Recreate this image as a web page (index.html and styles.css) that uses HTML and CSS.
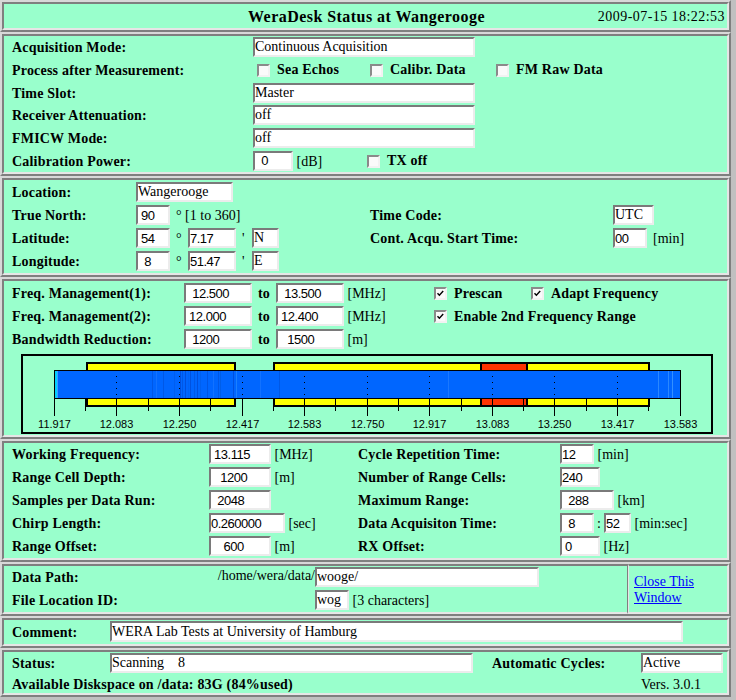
FILE: index.html
```html
<!DOCTYPE html>
<html>
<head>
<meta charset="utf-8">
<title>WeraDesk Status at Wangerooge</title>
<link rel="stylesheet" href="styles.css">
</head>
<body>

<div class="panel">
  <div class="cell head">
    <div></div>
    <div class="title">WeraDesk Status at Wangerooge</div>
    <div class="date">2009-07-15 18:22:53</div>
  </div>
</div>

<div class="panel">
  <div class="cell acq">
    <div class="lbl">Acquisition Mode:</div>
    <div class="ctl"><input class="in w222" type="text" value="Continuous Acquisition"></div>

    <div class="lbl">Process after Measurement:</div>
    <div class="opts">
      <span class="opt"><span class="cb"></span>Sea Echos</span>
      <span class="opt"><span class="cb"></span>Calibr. Data</span>
      <span class="opt"><span class="cb"></span>FM Raw Data</span>
    </div>

    <div class="lbl">Time Slot:</div>
    <div class="ctl"><input class="in w222" type="text" value="Master"></div>

    <div class="lbl">Receiver Attenuation:</div>
    <div class="ctl"><input class="in w222" type="text" value="off"></div>

    <div class="lbl">FMICW Mode:</div>
    <div class="ctl"><input class="in w222" type="text" value="off"></div>

    <div class="lbl">Calibration Power:</div>
    <div class="ctl">
      <input class="in num w40" type="text" value="  0">
      <span class="unit w74">[dB]</span>
      <span class="opt"><span class="cb"></span>TX off</span>
    </div>
  </div>
</div>

<div class="panel">
  <div class="cell loc">
    <div class="lbl">Location:</div>
    <div class="ctl"><input class="in w97" type="text" value="Wangerooge"></div>
    <div></div>
    <div></div>

    <div class="lbl">True North:</div>
    <div class="ctl"><input class="in num w34" type="text" value=" 90"><span class="deg-note">° [1 to 360]</span></div>
    <div class="lbl">Time Code:</div>
    <div class="ctl"><input class="in w41" type="text" value="UTC"></div>

    <div class="lbl">Latitude:</div>
    <div class="ctl">
      <input class="in num w34" type="text" value=" 54"><span class="deg">°</span>
      <input class="in num w48" type="text" value="7.17"><span class="minute">'</span>
      <input class="in w27" type="text" value="N">
    </div>
    <div class="lbl">Cont. Acqu. Start Time:</div>
    <div class="ctl"><input class="in num w34" type="text" value="00"><span class="unit gap6">[min]</span></div>

    <div class="lbl">Longitude:</div>
    <div class="ctl">
      <input class="in num w34" type="text" value="  8"><span class="deg">°</span>
      <input class="in num w48" type="text" value="51.47"><span class="minute">'</span>
      <input class="in w27" type="text" value="E">
    </div>
    <div></div>
    <div></div>
  </div>
</div>

<div class="panel">
  <div class="cell freq">
    <div class="frow">
      <div class="lbl flbl">Freq. Management(1):</div>
      <input class="in num w68" type="text" value="  12.500">
      <span class="to">to</span>
      <input class="in num w68" type="text" value="  13.500">
      <span class="unit w90">[MHz]</span>
      <span class="opt w97"><span class="cb"><svg class="tick" width="9" height="9" viewBox="0 0 9 9"><path d="M1.5 4.2L3.4 6.3L7.2 2" /></svg></span>Prescan</span>
      <span class="opt"><span class="cb"><svg class="tick" width="9" height="9" viewBox="0 0 9 9"><path d="M1.5 4.2L3.4 6.3L7.2 2" /></svg></span>Adapt Frequency</span>
    </div>
    <div class="frow">
      <div class="lbl flbl">Freq. Management(2):</div>
      <input class="in num w68" type="text" value=" 12.000">
      <span class="to">to</span>
      <input class="in num w68" type="text" value=" 12.400">
      <span class="unit w90">[MHz]</span>
      <span class="opt"><span class="cb"><svg class="tick" width="9" height="9" viewBox="0 0 9 9"><path d="M1.5 4.2L3.4 6.3L7.2 2" /></svg></span>Enable 2nd Frequency Range</span>
    </div>
    <div class="frow">
      <div class="lbl flbl">Bandwidth Reduction:</div>
      <input class="in num w68" type="text" value="  1200">
      <span class="to">to</span>
      <input class="in num w68" type="text" value="   1500">
      <span class="unit">[m]</span>
    </div>

    <svg class="chart" width="692" height="81" viewBox="21 352 692 81">
      <rect x="22" y="353" width="690" height="78" fill="none" stroke="#000" stroke-width="2"/>
      <rect x="87" y="361" width="148" height="43" fill="#ffff00" stroke="#000" stroke-width="2"/>
      <rect x="274" y="361" width="375" height="43" fill="#ffff00" stroke="#000" stroke-width="2"/>
      <rect x="481" y="361" width="46" height="43" fill="#ff3300" stroke="#000" stroke-width="2"/>
      <path d="M54.5 397V414M116.5 397V414M179.5 397V414M242.5 397V414M304.5 397V414M367.5 397V414M429.5 397V414M492.5 397V414M554.5 397V414M617.5 397V414M680.5 397V414" stroke="#000" stroke-width="1" fill="none"/>
      <path d="M85.5 397V409M148.5 397V409M210.5 397V409M273.5 397V409M335.5 397V409M398.5 397V409M461.5 397V409M523.5 397V409M586.5 397V409M648.5 397V409" stroke="#000" stroke-width="1" fill="none"/>
      <rect x="54.5" y="368.5" width="626" height="28" fill="#0066ff" stroke="#000" stroke-width="1"/>
      <g>
        <rect x="55" y="369" width="2" height="27" fill="#00d0ff"/>
        <rect x="57" y="369" width="1" height="27" fill="#3aa0ff"/>
        <rect x="152" y="369" width="1" height="27" fill="#0058e6"/>
        <rect x="156" y="369" width="1" height="27" fill="#1272ff"/>
        <rect x="163" y="369" width="1" height="27" fill="#0058e6"/>
        <rect x="174" y="369" width="1" height="27" fill="#005ef0"/>
        <rect x="180" y="369" width="1" height="27" fill="#0050dd"/>
        <rect x="182" y="369" width="1" height="27" fill="#0058e6"/>
        <rect x="185" y="369" width="1" height="27" fill="#0050dd"/>
        <rect x="188" y="369" width="1" height="27" fill="#0062f5"/>
        <rect x="190" y="369" width="1" height="27" fill="#0052e0"/>
        <rect x="194" y="369" width="1" height="27" fill="#005ae8"/>
        <rect x="197" y="369" width="1" height="27" fill="#0050dd"/>
        <rect x="200" y="369" width="1" height="27" fill="#0060f0"/>
        <rect x="207" y="369" width="1" height="27" fill="#0056e4"/>
        <rect x="213" y="369" width="1" height="27" fill="#1272ff"/>
        <rect x="218" y="369" width="1" height="27" fill="#0058e6"/>
        <rect x="220" y="369" width="1" height="27" fill="#005ee8"/>
        <rect x="233" y="369" width="1" height="27" fill="#0050dd"/>
        <rect x="236" y="369" width="1" height="27" fill="#1a80ff"/>
        <rect x="260" y="369" width="1" height="27" fill="#1272ff"/>
        <rect x="279" y="369" width="1" height="27" fill="#0058e6"/>
        <rect x="448" y="369" width="1" height="27" fill="#1a78ff"/>
        <rect x="658" y="369" width="1" height="27" fill="#2a88ff"/>
        <rect x="668" y="369" width="1" height="27" fill="#2a88ff"/>
        <rect x="672" y="369" width="1" height="27" fill="#3390ff"/>
      </g>
      <path d="M116.5 374V395M179.5 374V395M242.5 374V395M304.5 374V395M367.5 374V395M429.5 374V395M492.5 374V395M554.5 374V395M617.5 374V395" stroke="#000" stroke-width="1" stroke-dasharray="1 5" fill="none"/>
      <g class="axis">
        <text x="54.5" y="426">11.917</text>
        <text x="116.5" y="426">12.083</text>
        <text x="179.5" y="426">12.250</text>
        <text x="242.5" y="426">12.417</text>
        <text x="304.5" y="426">12.583</text>
        <text x="367.5" y="426">12.750</text>
        <text x="429.5" y="426">12.917</text>
        <text x="492.5" y="426">13.083</text>
        <text x="554.5" y="426">13.250</text>
        <text x="617.5" y="426">13.417</text>
        <text x="680.5" y="426">13.583</text>
      </g>
    </svg>
  </div>
</div>

<div class="panel">
  <div class="cell work">
    <div class="lbl">Working Frequency:</div>
    <div class="ctl"><input class="in num w62" type="text" value=" 13.115"><span class="unit">[MHz]</span></div>
    <div class="lbl">Cycle Repetition Time:</div>
    <div class="ctl"><input class="in num w34" type="text" value="12"><span class="unit">[min]</span></div>

    <div class="lbl">Range Cell Depth:</div>
    <div class="ctl"><input class="in num w62" type="text" value="   1200"><span class="unit">[m]</span></div>
    <div class="lbl">Number of Range Cells:</div>
    <div class="ctl"><input class="in num w40" type="text" value="240"></div>

    <div class="lbl">Samples per Data Run:</div>
    <div class="ctl"><input class="in num w62" type="text" value="  2048"></div>
    <div class="lbl">Maximum Range:</div>
    <div class="ctl"><input class="in num w54" type="text" value="  288"><span class="unit">[km]</span></div>

    <div class="lbl">Chirp Length:</div>
    <div class="ctl"><input class="in num w76" type="text" value="0.260000"><span class="unit">[sec]</span></div>
    <div class="lbl">Data Acquisiton Time:</div>
    <div class="ctl"><input class="in num w34" type="text" value="  8"><span class="colon">:</span><input class="in num w27" type="text" value="52"><span class="unit">[min:sec]</span></div>

    <div class="lbl">Range Offset:</div>
    <div class="ctl"><input class="in num w62" type="text" value="    600"><span class="unit">[m]</span></div>
    <div class="lbl">RX Offset:</div>
    <div class="ctl"><input class="in num w40" type="text" value=" 0"><span class="unit">[Hz]</span></div>
  </div>
</div>

<div class="panel">
  <div class="cell path left">
    <div class="pathlbl"><span class="lbl">Data Path:</span><span>/home/wera/data/</span></div>
    <div class="ctl"><input class="in w224" type="text" value="wooge/"></div>
    <div class="lbl">File Location ID:</div>
    <div class="ctl"><input class="in w34" type="text" value="wog"><span class="unit">[3 characters]</span></div>
  </div>
  <div class="cell right">
    <a class="close" href="#">Close This Window</a>
  </div>
</div>

<div class="panel">
  <div class="cell cmt">
    <div class="lbl cmtlbl">Comment:</div>
    <input class="in w573 h21" type="text" value="WERA Lab Tests at University of Hamburg">
  </div>
</div>

<div class="panel">
  <div class="cell status">
    <div class="lbl">Status:</div>
    <div class="ctl"><input class="in w363" type="text" value="Scanning    8"></div>
    <div class="lbl">Automatic Cycles:</div>
    <div class="ctl"><input class="in w82" type="text" value="Active"></div>
    <div class="lbl span3">Available Diskspace on /data: 83G (84%used)</div>
    <div class="vers">Vers. 3.0.1</div>
  </div>
</div>

</body>
</html>
```

FILE: styles.css
```css
* {
  box-sizing: border-box;
}

body {
  margin: 0;
  width: 736px;
  background: #c0c0c0;
  font-family: "Liberation Serif", "Times New Roman", serif;
  font-size: 14px;
  color: #000;
}

.panel {
  width: 731px;
  display: flex;
  border: 2px solid;
  border-color: #d8d8d8 #7f7f7f #7f7f7f #d8d8d8;
}

.cell {
  flex: 1;
  background: #99ffcc;
  border: 2px solid;
  border-color: #7f7f7f #e6e6e6 #e6e6e6 #7f7f7f;
  padding-left: 8px;
}

.lbl {
  font-weight: bold;
  letter-spacing: 0.2px;
  white-space: nowrap;
  padding-top: 2px;
}

.ctl {
  display: flex;
  align-items: center;
  white-space: nowrap;
}

.in {
  height: 20px;
  margin: 0;
  padding: 0;
  border: 2px solid;
  border-color: #7a7a7a #ececec #ececec #7a7a7a;
  background: #fff;
  font-family: "Liberation Serif", "Times New Roman", serif;
  font-size: 14px;
  color: #000;
  outline: none;
  flex: none;
}

.num {
  font-family: "Liberation Sans", Arial, sans-serif;
  font-size: 13px;
  letter-spacing: -0.5px;
}

.h21 { height: 21px; }
.w27 { width: 27px; }
.w34 { width: 34px; }
.w40 { width: 40px; }
.w41 { width: 41px; }
.w48 { width: 48px; }
.w54 { width: 54px; }
.w62 { width: 62px; }
.w68 { width: 68px; }
.w76 { width: 76px; }
.w82 { width: 82px; }
.w97 { width: 97px; }
.w222 { width: 222px; }
.w224 { width: 224px; }
.w363 { width: 363px; }
.w573 { width: 573px; }

.unit {
  padding-left: 3.5px;
  padding-top: 2px;
  white-space: nowrap;
  flex: none;
}

.unit.w74 { width: 74px; }
.unit.w90 { width: 90px; }
.unit.gap6 { padding-left: 6px; }

/* checkboxes */
.opt {
  display: flex;
  align-items: center;
  gap: 7px;
  font-weight: bold;
  letter-spacing: 0.2px;
  white-space: nowrap;
  flex: none;
  padding-top: 1px;
}

.opt.w97 { width: 97px; }

.cb {
  width: 13px;
  height: 13px;
  flex: none;
  display: flex;
  align-items: center;
  justify-content: center;
  border: 2px solid;
  border-color: #8a8a8a #f2f2f2 #f2f2f2 #8a8a8a;
  background: #fafafa;
}

.tick path {
  fill: none;
  stroke: #000;
  stroke-width: 1.4;
}

/* header */
.head {
  display: grid;
  grid-template-columns: 1fr auto 1fr;
  grid-template-rows: 24px;
  align-items: center;
  padding: 0 2px 0 4px;
}

.title {
  font-weight: bold;
  font-size: 16px;
  letter-spacing: 0.45px;
  padding-top: 2px;
}

.date {
  justify-self: end;
  letter-spacing: 0.45px;
  padding-top: 2px;
}

/* acquisition */
.acq {
  display: grid;
  grid-template-columns: 241px 1fr;
  grid-auto-rows: 22.667px;
  align-items: center;
}

.opts {
  display: grid;
  grid-template-columns: 113px 126px auto;
  align-items: center;
  padding-left: 4px;
}

/* location */
.loc {
  display: grid;
  grid-template-columns: 124px 234px 243px 1fr;
  grid-auto-rows: 23px;
  align-items: center;
  padding-top: 1px;
}

.deg-note {
  padding-left: 6px;
  padding-top: 2px;
}

.deg {
  width: 18px;
  padding-left: 6px;
  padding-top: 2px;
  flex: none;
}

.minute {
  width: 16px;
  padding-left: 6px;
  padding-top: 2px;
  flex: none;
}

/* frequency */
.freq {
  padding-top: 1px;
}

.frow {
  display: flex;
  align-items: center;
  height: 23px;
}

.flbl {
  width: 172px;
  flex: none;
}

.to {
  width: 24px;
  padding-left: 6px;
  padding-top: 2px;
  font-weight: bold;
  flex: none;
}

.chart {
  display: block;
  margin: 3px 0 0 9px;
}

.axis text {
  font-family: "Liberation Sans", Arial, sans-serif;
  font-size: 11px;
  text-anchor: middle;
  fill: #000;
}

/* working parameters */
.work {
  display: grid;
  grid-template-columns: 197px 149px 202px 1fr;
  grid-auto-rows: 23px;
  align-items: center;
}

.colon {
  width: 10px;
  padding-left: 3px;
  padding-top: 2px;
  flex: none;
}

/* data path */
.path {
  display: grid;
  grid-template-columns: 303px 1fr;
  grid-auto-rows: 23px;
  align-items: center;
}

.cell.left {
  border-right: 1px solid #7f7f7f;
}

.pathlbl {
  display: flex;
  justify-content: space-between;
  white-space: nowrap;
}

.cell.right {
  flex: 0 0 101px;
  border-left: 1px solid #e6e6e6;
  padding-left: 5px;
  padding-top: 2px;
  display: flex;
  align-items: center;
  line-height: 16px;
}

.close {
  color: #0000ff;
  text-decoration: underline;
}

/* comment */
.cmt {
  display: flex;
  align-items: center;
  height: 28px;
}

.cmtlbl {
  width: 98px;
  flex: none;
}

/* status */
.status {
  display: grid;
  grid-template-columns: 98px 382px 149px 1fr;
  grid-template-rows: 23px 18px;
  align-items: center;
}

.span3 {
  grid-column: 1 / 4;
}

.vers {
  white-space: nowrap;
  padding-top: 2px;
}
```
